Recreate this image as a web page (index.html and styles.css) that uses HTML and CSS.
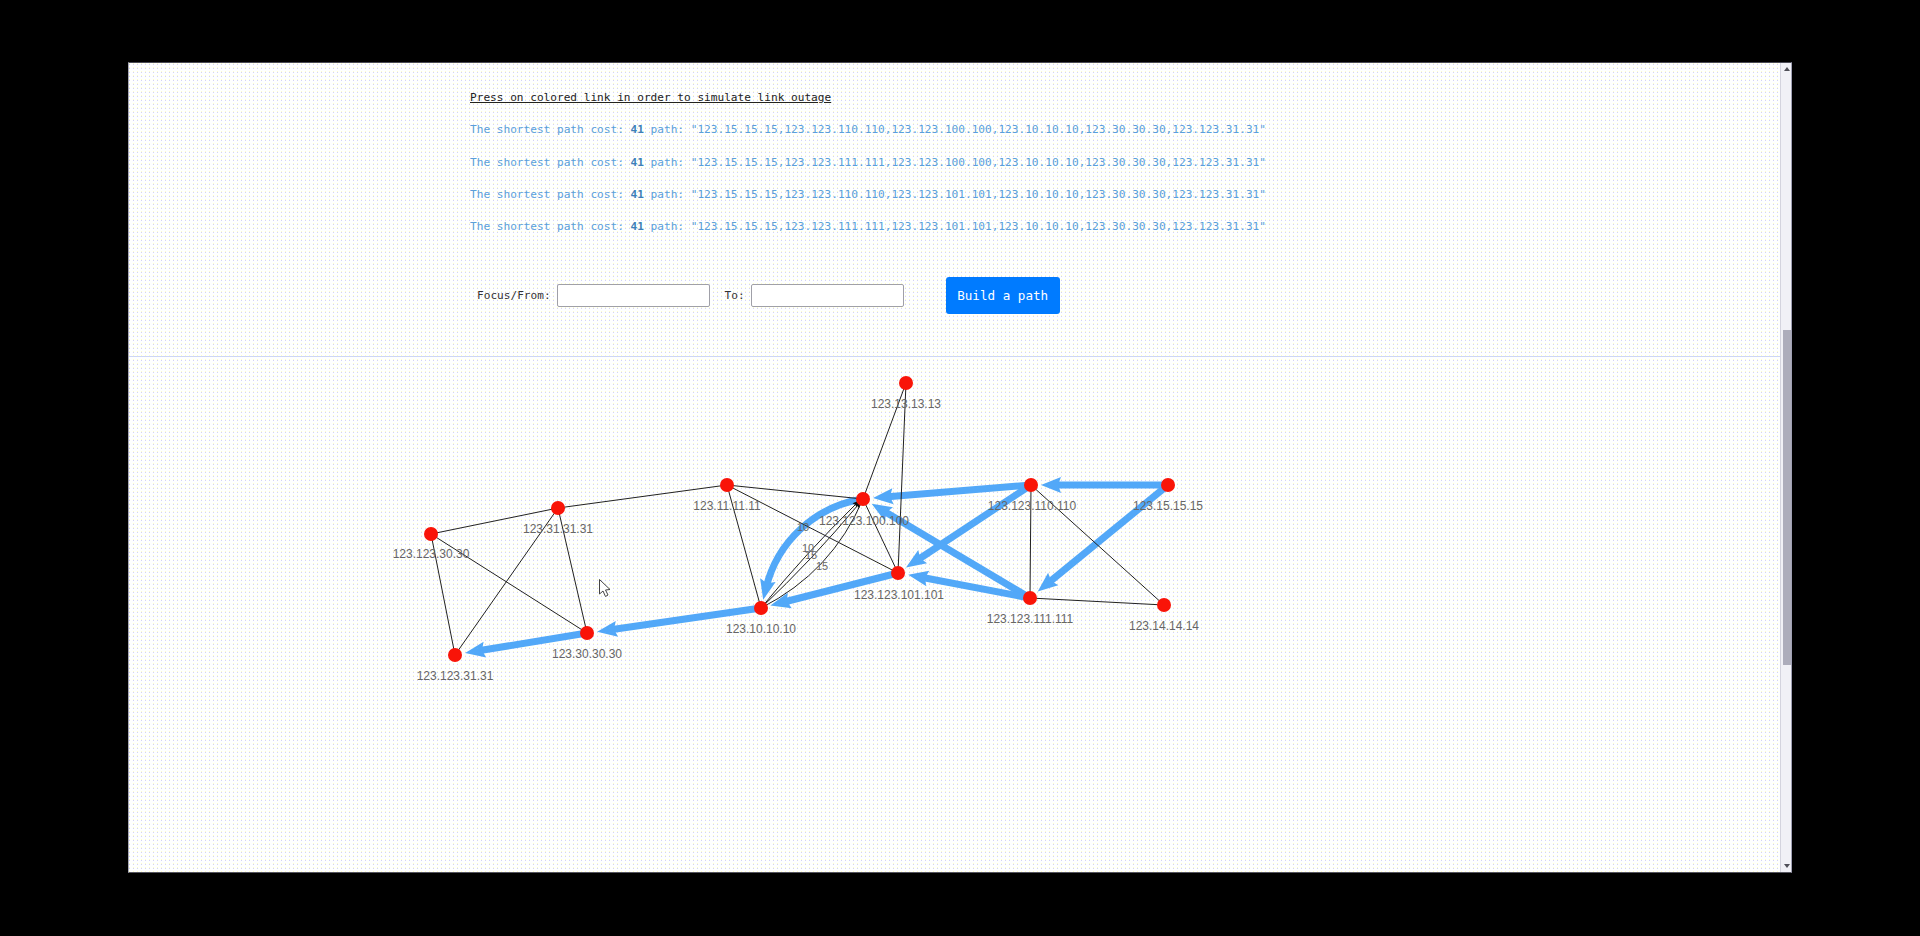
FILE: index.html
```html
<!DOCTYPE html>
<html lang="en">
<head>
<meta charset="utf-8">
<title>Shortest path simulator</title>
<link rel="stylesheet" href="styles.css">
</head>
<body>
<div class="window">
  <main class="page">
    <section class="intro">
      <p class="hint">Press on colored link in order to simulate link outage</p>
      <p class="path">The shortest path cost: <strong>41</strong> path: "123.15.15.15,123.123.110.110,123.123.100.100,123.10.10.10,123.30.30.30,123.123.31.31"</p>
      <p class="path">The shortest path cost: <strong>41</strong> path: "123.15.15.15,123.123.111.111,123.123.100.100,123.10.10.10,123.30.30.30,123.123.31.31"</p>
      <p class="path">The shortest path cost: <strong>41</strong> path: "123.15.15.15,123.123.110.110,123.123.101.101,123.10.10.10,123.30.30.30,123.123.31.31"</p>
      <p class="path">The shortest path cost: <strong>41</strong> path: "123.15.15.15,123.123.111.111,123.123.101.101,123.10.10.10,123.30.30.30,123.123.31.31"</p>
      <form class="controls">
        <label class="field-label" for="from">Focus/From:</label>
        <input class="field" id="from" type="text">
        <label class="field-label to-label" for="to">To:</label>
        <input class="field" id="to" type="text">
        <button class="build" type="button">Build a path</button>
      </form>
    </section>
    <svg class="graph" width="1651" height="515" viewBox="129 357 1651 515">
      <defs>
        <marker id="head" markerUnits="userSpaceOnUse" markerWidth="24" markerHeight="20" refX="8" refY="10" orient="auto" overflow="visible">
          <path class="head-fill" d="M20 10 L0 2 L3 10 L0 18 Z"/>
        </marker>
        <marker id="thin-head" markerUnits="userSpaceOnUse" markerWidth="8" markerHeight="8" refX="2" refY="4" orient="auto" overflow="visible">
          <path class="thin-head-fill" d="M7 4 L0 1 L1 4 L0 7 Z"/>
        </marker>
      </defs>
      <g class="thick">
        <line x1="1168" y1="485" x2="1053" y2="485"/>
        <line x1="1031" y1="485" x2="885" y2="497"/>
        <line x1="1168" y1="485" x2="1047" y2="584"/>
        <line x1="1031" y1="485" x2="916" y2="561"/>
        <line x1="1030" y1="598" x2="882" y2="510"/>
        <line x1="1030" y1="598" x2="920" y2="577"/>
        <line x1="898" y1="573" x2="782" y2="602.5"/>
        <line x1="761" y1="608" x2="609" y2="630"/>
        <line x1="587" y1="633" x2="477" y2="651"/>
        <path d="M863 499 A118 118 0 0 0 766 588"/>
      </g>
      <g class="thin">
        <line x1="431" y1="534" x2="558" y2="508"/>
        <line x1="558" y1="508" x2="727" y2="485"/>
        <line x1="727" y1="485" x2="863" y2="499"/>
        <line x1="727" y1="485" x2="898" y2="573"/>
        <line x1="727" y1="485" x2="761" y2="608"/>
        <line x1="431" y1="534" x2="455" y2="655"/>
        <line x1="431" y1="534" x2="587" y2="633"/>
        <line x1="558" y1="508" x2="455" y2="655"/>
        <line x1="558" y1="508" x2="587" y2="633"/>
        <line x1="863" y1="499" x2="898" y2="573"/>
        <line x1="863" y1="499" x2="906" y2="383"/>
        <line x1="906" y1="383" x2="898" y2="573"/>
        <line x1="1031" y1="485" x2="1030" y2="598"/>
        <line x1="1031" y1="485" x2="1164" y2="605"/>
        <line x1="1030" y1="598" x2="1164" y2="605"/>
        <path class="tipped" d="M761 608 Q806 553 856 504"/>
        <path class="tipped" d="M761 608 Q812 560 858 505"/>
        <path d="M761 608 Q832 572 863 499"/>
      </g>
      <g class="weights">
        <text x="803" y="531">10</text>
        <text x="808" y="552">10</text>
        <text x="811" y="559">15</text>
        <text x="822" y="570">15</text>
      </g>
      <g class="nodes">
        <circle cx="431" cy="534" r="7"/>
        <circle cx="558" cy="508" r="7"/>
        <circle cx="727" cy="485" r="7"/>
        <circle cx="863" cy="499" r="7"/>
        <circle cx="761" cy="608" r="7"/>
        <circle cx="587" cy="633" r="7"/>
        <circle cx="455" cy="655" r="7"/>
        <circle cx="898" cy="573" r="7"/>
        <circle cx="906" cy="383" r="7"/>
        <circle cx="1031" cy="485" r="7"/>
        <circle cx="1168" cy="485" r="7"/>
        <circle cx="1030" cy="598" r="7"/>
        <circle cx="1164" cy="605" r="7"/>
      </g>
      <g class="labels">
        <text x="431" y="558">123.123.30.30</text>
        <text x="558" y="533">123.31.31.31</text>
        <text x="727" y="510">123.11.11.11</text>
        <text x="864" y="525">123.123.100.100</text>
        <text x="906" y="408">123.13.13.13</text>
        <text x="1032" y="510">123.123.110.110</text>
        <text x="1168" y="510">123.15.15.15</text>
        <text x="899" y="599">123.123.101.101</text>
        <text x="1030" y="623">123.123.111.111</text>
        <text x="1164" y="630">123.14.14.14</text>
        <text x="761" y="633">123.10.10.10</text>
        <text x="587" y="658">123.30.30.30</text>
        <text x="455" y="680">123.123.31.31</text>
      </g>
      <path class="pointer" d="M599.5 579.5 V594 L603 591 L605.500 596.500 L608 595 L605.500 590 L610 589.500 Z"/>
    </svg>
  </main>
  <aside class="scrollbar">
    <span class="arrow arrow-up"></span>
    <span class="track-top"></span>
    <span class="thumb"></span>
    <span class="track-bottom"></span>
    <span class="arrow arrow-down"></span>
  </aside>
</div>
</body>
</html>
```
FILE: styles.css
```css
html, body {
  margin: 0;
  height: 100%;
  background: #000;
  overflow: hidden;
}

.window {
  box-sizing: border-box;
  width: 1664px;
  height: 811px;
  margin: 62px 0 0 128px;
  display: flex;
  border-top: 1px solid #4a4a55;
  border-left: 1px solid #a9a9b8;
  border-bottom: 1px solid #55555f;
  border-right: 1px solid #a0a0b4;
  background-color: #feffff;
  background-image:
    radial-gradient(circle at 0.5px 0.5px, #ffffc8 0.72px, transparent 0.72px),
    radial-gradient(circle at 0.5px 1.5px, #d2d2f8 0.72px, transparent 0.72px);
  background-size: 4px 4px;
}

.page {
  flex: 1;
  min-width: 0;
  display: flex;
  flex-direction: column;
}

.intro {
  box-sizing: border-box;
  height: 294px;
  padding: 27px 0 0 341px;
  border-bottom: 1px solid #cdd6f5;
  font-family: "DejaVu Sans Mono", "Liberation Mono", monospace;
  font-size: 11.11px;
  line-height: 16px;
}

.intro p {
  margin: 0 0 16.25px;
  white-space: nowrap;
}

.hint {
  color: #222;
  text-decoration: underline;
}

.path {
  color: #5a9fdb;
}

.path strong {
  color: #3d7fb8;
  font-weight: 700;
}

.controls {
  display: flex;
  align-items: center;
  margin-top: 42px;
  padding-left: 7px;
}

.field-label {
  color: #333;
  margin-right: 6px;
}

.to-label {
  margin-left: 15px;
  margin-right: 6px;
}

.field {
  box-sizing: border-box;
  width: 153px;
  height: 23px;
  padding: 0 4px;
  border: 1px solid #a0a0a8;
  border-radius: 2px;
  background: #fff;
}

.build {
  box-sizing: border-box;
  width: 114px;
  height: 37px;
  margin-left: 42px;
  padding: 0;
  border: 0;
  border-radius: 3px;
  background: #007bff;
  color: #fff;
  font: 12.6px "DejaVu Sans Mono", "Liberation Mono", monospace;
}

.graph {
  display: block;
}

.thick line, .thick path {
  fill: none;
  stroke: #52a8f8;
  stroke-width: 7;
  marker-end: url(#head);
}

.head-fill {
  fill: #52a8f8;
}

.thin-head-fill {
  fill: #111;
}

.thin line, .thin path {
  fill: none;
  stroke: #222;
  stroke-width: 1;
}

.thin .tipped {
  marker-end: url(#thin-head);
}

.nodes circle {
  fill: #f91408;
}

.labels text {
  fill: #666;
  font: 12px "Liberation Sans", Arial, sans-serif;
  text-anchor: middle;
}

.weights text {
  fill: #666;
  font: 11px "Liberation Sans", Arial, sans-serif;
  text-anchor: middle;
}

.pointer {
  fill: #fff;
  stroke: #444;
  stroke-width: 1;
}

.scrollbar {
  width: 11px;
  box-sizing: border-box;
  padding-left: 2px;
  display: flex;
  flex-direction: column;
  align-items: stretch;
  background: #f1f1f6;
  border-left: 1px solid #d4d4de;
}

.arrow {
  height: 11px;
  flex: none;
  position: relative;
}

.arrow::after {
  content: "";
  position: absolute;
  left: 1px;
  border-left: 3.5px solid transparent;
  border-right: 3.5px solid transparent;
}

.arrow-up::after {
  top: 4px;
  border-bottom: 4px solid #505058;
}

.arrow-down::after {
  top: 3px;
  border-top: 4px solid #505058;
}

.track-top {
  height: 256px;
  flex: none;
}

.thumb {
  height: 335px;
  flex: none;
  background: #adadbb;
}

.track-bottom {
  flex: 1;
}
```
